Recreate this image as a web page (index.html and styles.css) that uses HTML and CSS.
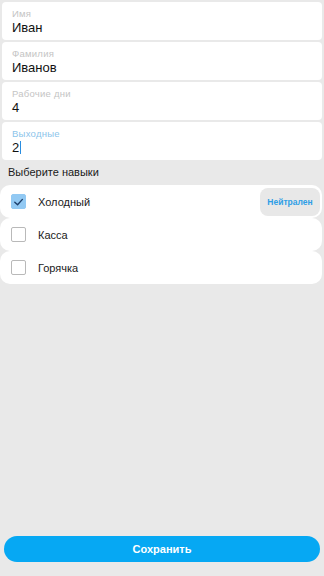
FILE: index.html
```html
<!DOCTYPE html>
<html lang="ru">
<head>
<meta charset="utf-8">
<link rel="stylesheet" href="styles.css">
</head>
<body>
<div class="page">
  <div class="fields">
    <div class="field">
      <div class="label">Имя</div>
      <div class="value">Иван</div>
    </div>
    <div class="field">
      <div class="label">Фамилия</div>
      <div class="value">Иванов</div>
    </div>
    <div class="field">
      <div class="label">Рабочие дни</div>
      <div class="value">4</div>
    </div>
    <div class="field focused">
      <div class="label">Выходные</div>
      <div class="value">2<span class="caret"></span></div>
    </div>
  </div>
  <div class="section-title">Выберите навыки</div>
  <div class="skills">
    <div class="skill">
      <span class="box checked">
        <svg viewBox="0 0 14 14" width="14" height="14"><path d="M3 7.2 L6 10 L11.2 4.2" fill="none" stroke="#1d3f6b" stroke-width="1.5" stroke-linecap="round" stroke-linejoin="round"/></svg>
      </span>
      <span class="name">Холодный</span>
      <span class="neutral">Нейтрален</span>
    </div>
    <div class="skill">
      <span class="box"></span>
      <span class="name">Касса</span>
    </div>
    <div class="skill">
      <span class="box"></span>
      <span class="name">Горячка</span>
    </div>
  </div>
  <div class="footer">
    <button class="save">Сохранить</button>
  </div>
</div>
</body>
</html>
```
FILE: styles.css
```css
html, body {
  margin: 0;
  padding: 0;
}
body {
  background: #e9e9e9;
  font-family: "Liberation Sans", Roboto, sans-serif;
  color: #111;
}
.page {
  height: 576px;
  display: flex;
  flex-direction: column;
}
.fields {
  display: flex;
  flex-direction: column;
  gap: 2px;
  padding: 2px 2px 0 2px;
}
.field {
  background: #fff;
  border-radius: 4px;
  height: 38px;
  box-sizing: border-box;
  padding: 6px 10px 5px 10px;
}
.label {
  font-size: 9.5px;
  line-height: 11px;
  letter-spacing: 0.25px;
  color: #c4c4c4;
}
.focused .label {
  color: #8cc4ea;
}
.value {
  margin-top: 1px;
  font-size: 13px;
  line-height: 15px;
  color: #111;
  display: flex;
  align-items: center;
}
.caret {
  display: inline-block;
  width: 1px;
  height: 13px;
  background: #2a8de0;
  margin-left: 1px;
}
.section-title {
  font-size: 11px;
  line-height: 14px;
  padding: 5px 8px 6px 8px;
  color: #1a1a1a;
}
.skills {
  display: flex;
  flex-direction: column;
  padding: 0 2px 0 0;
}
.skill {
  background: #fff;
  border-radius: 10px;
  height: 33px;
  display: flex;
  align-items: center;
  padding: 0 2px 0 11px;
  box-sizing: border-box;
}
.box {
  width: 15px;
  height: 15px;
  box-sizing: border-box;
  border: 1.3px solid #b9b9b9;
  border-radius: 2px;
  background: #fff;
  display: flex;
  align-items: center;
  justify-content: center;
  flex-shrink: 0;
}
.box.checked {
  background: #92c9f3;
  border-color: #92c9f3;
}
.box svg {
  display: block;
}
.name {
  font-size: 11px;
  margin-left: 12px;
  color: #1a1a1a;
  flex: 1;
}
.neutral {
  background: #e8e8e8;
  border-radius: 8px;
  height: 28px;
  width: 60px;
  display: flex;
  align-items: center;
  justify-content: center;
  font-size: 8.5px;
  font-weight: bold;
  color: #2e9ee6;
}
.footer {
  margin-top: auto;
  padding: 0 4px 14px 4px;
}
.save {
  display: block;
  width: 100%;
  height: 26px;
  border: none;
  border-radius: 13px;
  background: #06a8f3;
  color: #fff;
  font-family: "Liberation Sans", Roboto, sans-serif;
  font-size: 11px;
  font-weight: bold;
  padding: 0;
}
```
